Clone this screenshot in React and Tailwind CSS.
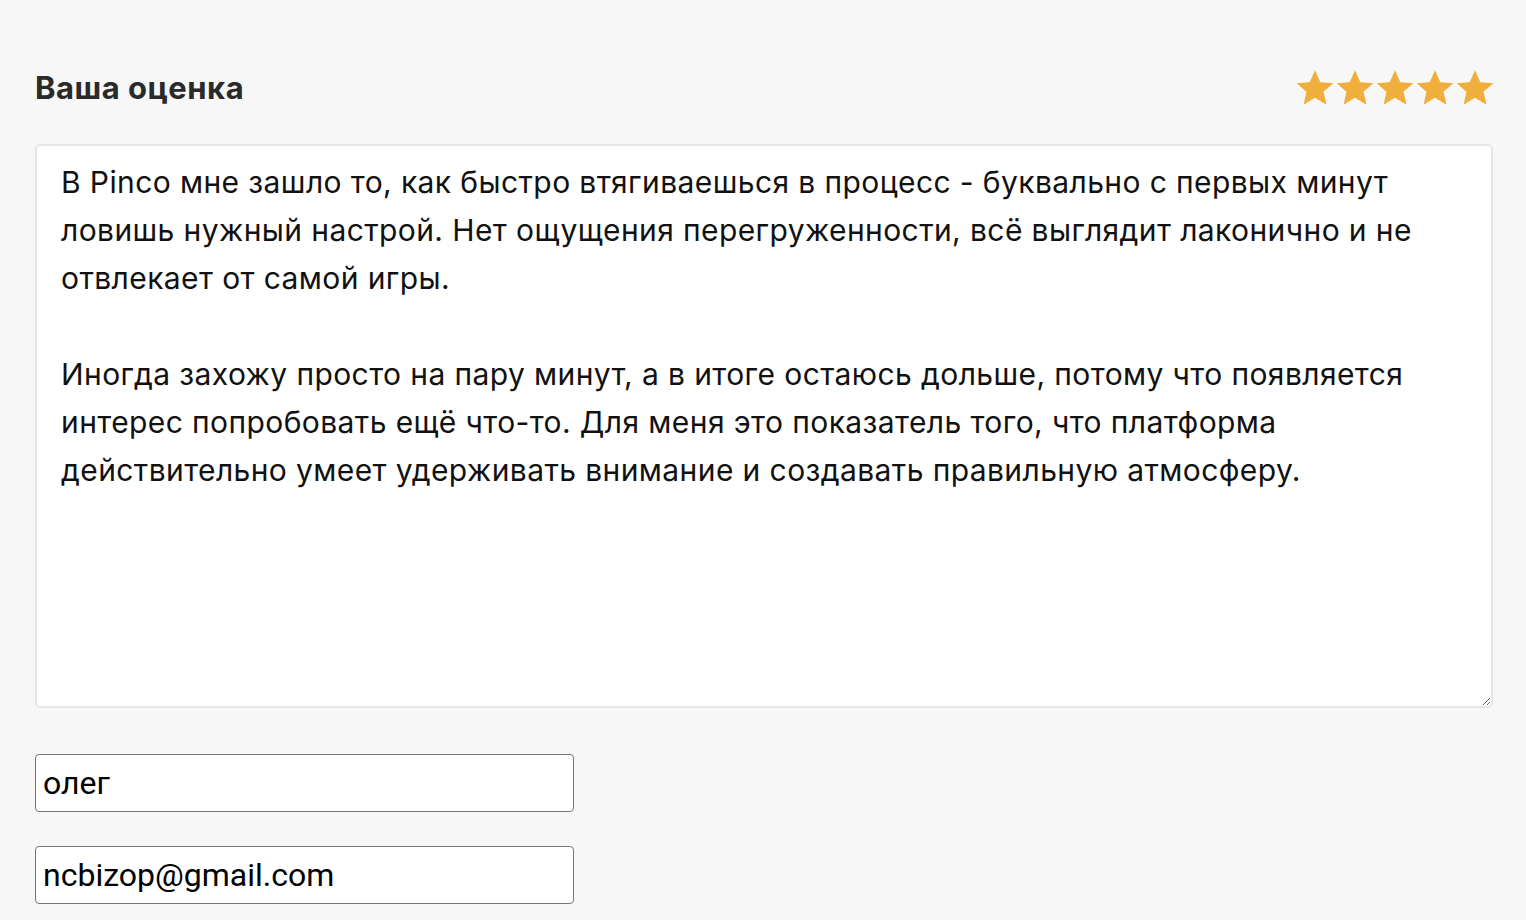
import { useState } from 'react';

const reviewText =
  'В Pinco мне зашло то, как быстро втягиваешься в процесс - буквально с первых минут ловишь нужный настрой. Нет ощущения перегруженности, всё выглядит лаконично и не отвлекает от самой игры.\n\nИногда захожу просто на пару минут, а в итоге остаюсь дольше, потому что появляется интерес попробовать ещё что-то. Для меня это показатель того, что платформа действительно умеет удерживать внимание и создавать правильную атмосферу.';

function Star() {
  return (
    <svg viewBox="0 0 24 24" className="w-10 h-10" fill="#f0ae3c">
      <path d="M12 1.4l3.2 7.2 7.8.6-5.9 5.1 1.8 7.7L12 17.9l-6.9 4.1 1.8-7.7L1 9.2l7.8-.6z" />
    </svg>
  );
}

export default function App() {
  const [text, setText] = useState(reviewText);
  const [name, setName] = useState('олег');
  const [email, setEmail] = useState('ncbizop@gmail.com');

  return (
    <div className="min-h-screen bg-[#f7f7f7] px-[35px] pt-[68px] font-['Inter',sans-serif]">
      <div className="w-[1458px]">
        <div className="flex items-center justify-between h-10">
          <h3 className="text-[31px] font-bold text-[#2a2a2a] tracking-[0.5px]">Ваша оценка</h3>
          <div className="flex -mr-[2px]">
            <Star />
            <Star />
            <Star />
            <Star />
            <Star />
          </div>
        </div>

        <textarea
          value={text}
          onChange={(e) => setText(e.target.value)}
          className="mt-[36px] block w-full h-[564px] bg-white border-2 border-[#e6e6e6] rounded-[5px] pl-[24px] pr-[20px] pt-[12px] pb-[14px] text-[30px] leading-[48px] tracking-[0.4px] text-[#111] outline-none font-['Inter',sans-serif]"
        />

        <div className="mt-[46px] flex flex-col gap-[34px]">
          <input
            value={name}
            onChange={(e) => setName(e.target.value)}
            className="block w-[539px] h-[58px] bg-white border border-[#767676] rounded-[4px] px-[7px] text-[32px] text-black outline-none font-['Roboto',sans-serif]"
          />
          <input
            autoFocus
            value={email}
            onChange={(e) => setEmail(e.target.value)}
            className="block w-[539px] h-[58px] bg-white border border-[#767676] rounded-[4px] px-[7px] text-[32px] text-black outline-none font-['Roboto',sans-serif]"
          />
        </div>
      </div>
    </div>
  );
}
